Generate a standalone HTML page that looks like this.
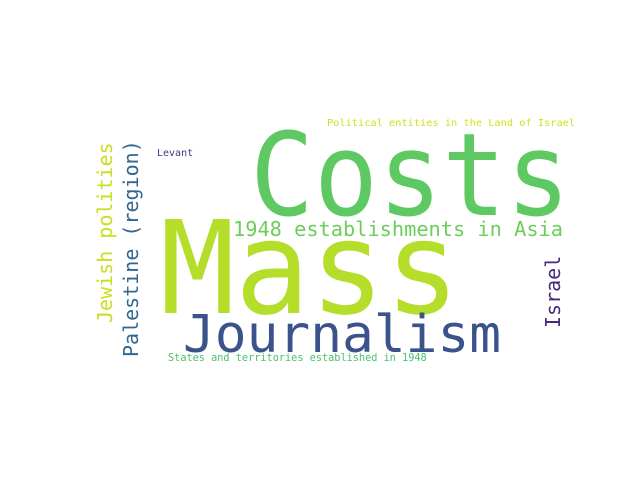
<!DOCTYPE html>
<html><head><meta charset="utf-8"><style>
html,body{margin:0;padding:0;background:#fff;width:640px;height:480px;overflow:hidden}
span{position:absolute;font-family:"DejaVu Sans Mono","Liberation Mono",monospace;line-height:1;white-space:nowrap;transform-origin:left top}
.v{transform:rotate(-90deg)}
</style></head><body>
<span style="left:250px;top:119px;font-size:115px;color:#5ec962;transform:scaleX(0.925)">Costs</span>
<span style="left:160px;top:205px;font-size:129px;color:#b5de2b;transform:scaleX(0.965)">Mass</span>
<span style="left:183px;top:309px;font-size:52px;color:#3b528b;transform:scaleX(1.016)">Journalism</span>
<span style="left:233px;top:219px;font-size:20px;color:#6ccd5a;transform:scaleX(1.015)">1948 establishments in Asia</span>
<span style="left:327px;top:119px;font-size:10px;color:#d0e11c;transform:scaleX(1.03)">Political entities in the Land of Israel</span>
<span style="left:168px;top:352px;font-size:11px;color:#4ac16d;transform:scaleX(0.93)">States and territories established in 1948</span>
<span style="left:157px;top:149px;font-size:10px;color:#46337e">Levant</span>
<span class="v" style="left:95px;top:323px;font-size:20px;color:#c8e020">Jewish polities</span>
<span class="v" style="left:121px;top:357px;font-size:20px;color:#31688e">Palestine (region)</span>
<span class="v" style="left:543px;top:328px;font-size:20px;color:#482878">Israel</span>
</body></html>
